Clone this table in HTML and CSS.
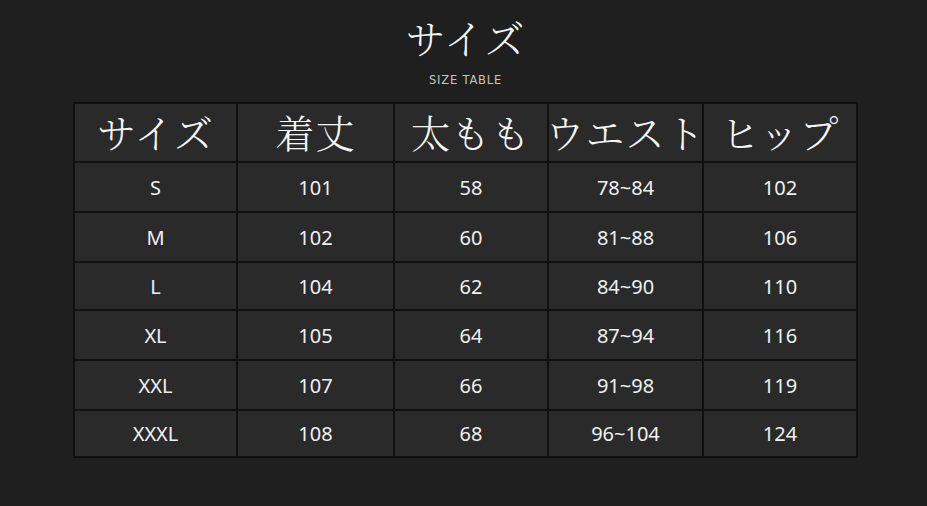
FILE: index.html
```html
<!DOCTYPE html>
<html lang="ja">
<head>
<meta charset="utf-8">
<link rel="stylesheet" href="styles.css">
</head>
<body>
<div class="page">
  <header class="head">
    <h1 class="title">サイズ</h1>
    <p class="subtitle">SIZE TABLE</p>
  </header>
  <div class="table">
    <div class="cell th">サイズ</div>
    <div class="cell th">着丈</div>
    <div class="cell th">太もも</div>
    <div class="cell th">ウエスト</div>
    <div class="cell th">ヒップ</div>

    <div class="cell">S</div><div class="cell">101</div><div class="cell">58</div><div class="cell">78~84</div><div class="cell">102</div>
    <div class="cell">M</div><div class="cell">102</div><div class="cell">60</div><div class="cell">81~88</div><div class="cell">106</div>
    <div class="cell">L</div><div class="cell">104</div><div class="cell">62</div><div class="cell">84~90</div><div class="cell">110</div>
    <div class="cell">XL</div><div class="cell">105</div><div class="cell">64</div><div class="cell">87~94</div><div class="cell">116</div>
    <div class="cell">XXL</div><div class="cell">107</div><div class="cell">66</div><div class="cell">91~98</div><div class="cell">119</div>
    <div class="cell">XXXL</div><div class="cell">108</div><div class="cell">68</div><div class="cell">96~104</div><div class="cell">124</div>
  </div>
</div>
</body>
</html>
```

FILE: styles.css
```css
html, body {
  margin: 0;
  padding: 0;
  background: #1f1f1f;
}
.page {
  width: 927px;
  height: 506px;
  overflow: hidden;
  background: #1f1f1f;
  padding-top: 13px;
  box-sizing: border-box;
}
.head {
  display: flex;
  flex-direction: column;
  align-items: center;
}
.title {
  margin: 0;
  font-family: "Noto Serif CJK JP", "Noto Sans CJK JP", serif;
  font-weight: 300;
  font-size: 40px;
  line-height: 48px;
  color: #f4f4f4;
  letter-spacing: 1px;
  padding-left: 4px;
}
.subtitle {
  margin: 12px 0 0 0;
  font-family: "DejaVu Sans", sans-serif;
  font-size: 11.5px;
  line-height: 14px;
  letter-spacing: 0.8px;
  color: #c4c4c4;
  padding-left: 4px;
}
.table {
  margin: 15px 0 0 73px;
  width: 785px;
  display: grid;
  grid-template-columns: 161px 155px 152px 153px 152px;
  grid-template-rows: 57px 48px 48px 46px 48px 48px 45px;
  gap: 2px;
  padding: 2px;
  box-sizing: border-box;
  background: #101010;
}
.cell {
  background: #2a2a2a;
  display: flex;
  align-items: center;
  justify-content: center;
  font-family: "Noto Sans", "Open Sans", sans-serif;
  font-size: 20px;
  font-weight: 400;
  color: #f0f0f0;
  white-space: nowrap;
}
.th {
  font-family: "Noto Serif CJK JP", "Noto Sans CJK JP", serif;
  font-weight: 300;
  font-size: 39px;
  color: #f6f6f6;
  letter-spacing: 1px;
  padding-bottom: 3px;
}
```
